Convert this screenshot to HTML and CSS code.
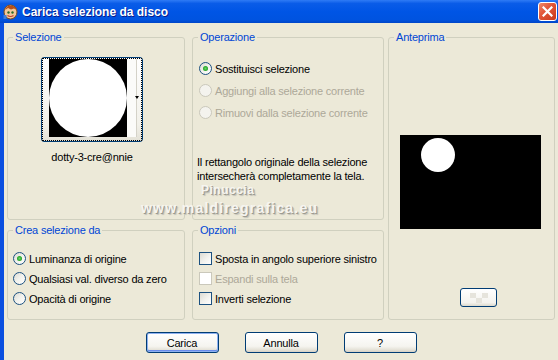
FILE: index.html
```html
<!DOCTYPE html>
<html lang="it">
<head>
    <meta charset="UTF-8">
    <title>Carica selezione da disco</title>
    <link rel="stylesheet" href="styles.css">
</head>
<body>
    <div class="window">
        <div class="titlebar">
            <svg class="app-icon" width="15" height="16" viewBox="0 0 15 16">
                <ellipse cx="7.5" cy="8" rx="6.5" ry="7" fill="#f2c89a" stroke="#7a4a1c" stroke-width="1"/>
                <path d="M2 6 Q4 1 8 1.5 Q13 2 13.5 6 L11 4.5 L8 5.5 L5 4 Z" fill="#b5501d"/>
                <circle cx="5.5" cy="8.5" r="1.2" fill="#2a6b2a"/>
                <circle cx="9.5" cy="8.5" r="1.2" fill="#2a6b2a"/>
                <path d="M4.5 11.5 Q7.5 13.5 10.5 11.5" stroke="#c0392b" stroke-width="1.2" fill="none"/>
                <rect x="0.5" y="11" width="3" height="4" fill="#3f7fd9"/>
            </svg>
            <span class="title">Carica selezione da disco</span>
            <div class="close">
                <svg width="11" height="11" viewBox="0 0 11 11">
                    <path d="M1.5 1.5 L9.5 9.5 M9.5 1.5 L1.5 9.5" stroke="#fff" stroke-width="2.2" stroke-linecap="square"/>
                </svg>
            </div>
        </div>

        <div class="content">
            <div class="panels">
                <fieldset class="group sel">
                    <legend>Selezione</legend>
                    <div class="thumb-wrap">
                        <div class="thumb">
                            <div class="thumb-inner">
                                <svg width="78" height="78" viewBox="0 0 78 78">
                                    <rect width="78" height="78" fill="#000"/>
                                    <circle cx="39" cy="39" r="39" fill="#fff"/>
                                </svg>
                                <div class="thumb-strip"></div>
                                <div class="thumb-arrow"></div>
                            </div>
                        </div>
                        <div class="thumb-name">dotty-3-cre@nnie</div>
                    </div>
                </fieldset>

                <fieldset class="group op">
                    <legend>Operazione</legend>
                    <div class="rows rows-op">
                        <div class="row"><span class="radio checked"></span><span>Sostituisci selezione</span></div>
                        <div class="row disabled"><span class="radio"></span><span>Aggiungi alla selezione corrente</span></div>
                        <div class="row disabled"><span class="radio"></span><span>Rimuovi dalla selezione corrente</span></div>
                    </div>
                    <p class="note">Il rettangolo originale della selezione<br>intersecherà completamente la tela.</p>
                </fieldset>

                <fieldset class="group prev">
                    <legend>Anteprima</legend>
                    <svg class="preview" width="141" height="94" viewBox="0 0 141 94">
                        <rect width="141" height="94" fill="#000"/>
                        <circle cx="38" cy="20" r="17" fill="#fff"/>
                    </svg>
                    <div class="small-btn">
                        <svg width="18" height="10" viewBox="0 0 18 10">
                            <rect x="0" y="0" width="6" height="5" fill="#e6e4dc"/>
                            <rect x="12" y="0" width="6" height="5" fill="#e6e4dc"/>
                            <rect x="6" y="5" width="6" height="5" fill="#e6e4dc"/>
                        </svg>
                    </div>
                </fieldset>

                <fieldset class="group crea">
                    <legend>Crea selezione da</legend>
                    <div class="rows">
                        <div class="row"><span class="radio checked"></span><span>Luminanza di origine</span></div>
                        <div class="row"><span class="radio"></span><span>Qualsiasi val. diverso da zero</span></div>
                        <div class="row"><span class="radio"></span><span>Opacità di origine</span></div>
                    </div>
                </fieldset>

                <fieldset class="group opt">
                    <legend>Opzioni</legend>
                    <div class="rows rows-opt">
                        <div class="row"><span class="check"></span><span>Sposta in angolo superiore sinistro</span></div>
                        <div class="row disabled"><span class="check"></span><span>Espandi sulla tela</span></div>
                        <div class="row"><span class="check"></span><span>Inverti selezione</span></div>
                    </div>
                </fieldset>
            </div>

            <div class="actions">
                <button class="btn default">Carica</button>
                <button class="btn">Annulla</button>
                <button class="btn">?</button>
            </div>

            <div class="watermark">
                <div class="wm-name">Pinuccia</div>
                <div class="wm-site">www.maldiregrafica.eu</div>
            </div>
        </div>
    </div>
</body>
</html>
```

FILE: styles.css
```css
body {
    margin: 0;
    font-family: 'Liberation Sans', Arial, sans-serif;
    font-size: 11px;
    letter-spacing: -0.2px;
    color: #000;
}
.window {
    width: 558px;
    height: 360px;
    display: flex;
    flex-direction: column;
    overflow: hidden;
    background-color: #ece9d8;
}
.titlebar {
    height: 23px;
    display: flex;
    align-items: center;
    padding-left: 3px;
    background: linear-gradient(#2f7bf5 0%, #0a5ce8 15%, #0055e5 50%, #0053e0 85%, #0046c8 100%);
    flex-shrink: 0;
}
.app-icon {
    flex-shrink: 0;
}
.title {
    margin-left: 4px;
    color: #fff;
    font-size: 12px;
    font-weight: bold;
    letter-spacing: 0;
    text-shadow: 1px 1px 0 #0a1c8a;
}
.close {
    margin-left: auto;
    margin-right: 1px;
    width: 19px;
    height: 19px;
    box-sizing: border-box;
    border: 1px solid #fff;
    border-radius: 3px;
    background: linear-gradient(135deg, #f08a6a 0%, #e2583a 40%, #c9381a 100%);
    display: flex;
    align-items: center;
    justify-content: center;
}
.content {
    flex: 1;
    position: relative;
    border-left: 4px solid #0a4fe0;
}
.panels {
    display: grid;
    grid-template-columns: 178px 7px 192px 4px 167px;
    grid-template-rows: 189px 96px;
    row-gap: 4px;
    padding: 8px 0 0 3px;
}
.group {
    margin: 0;
    padding: 0;
    min-width: 0;
    border: 1px solid #d0d0bf;
    border-radius: 3px;
}
.group legend {
    margin-left: 5px;
    padding: 0 2px;
    line-height: 13px;
    color: #0046d5;
}
.sel { grid-column: 1; grid-row: 1; }
.op { grid-column: 3; grid-row: 1; }
.prev { grid-column: 5; grid-row: 1 / span 2; }
.crea { grid-column: 1; grid-row: 2; }
.opt { grid-column: 3; grid-row: 2; }

.thumb-wrap {
    margin: 13px 0 0 33px;
    width: 102px;
    text-align: center;
}
.thumb {
    width: 102px;
    height: 85px;
    box-sizing: border-box;
    border: 1px solid #003c74;
    border-radius: 3px;
    padding: 0;
    background: linear-gradient(#ffffff, #f2f1ea 80%, #e3e1d6);
}
.thumb-inner {
    height: 100%;
    box-sizing: border-box;
    border: 1px dotted #000;
    display: flex;
    align-items: flex-start;
    padding-left: 6px;
}
.thumb-inner svg {
    display: block;
}
.thumb-strip {
    width: 9px;
    height: 78px;
    background-color: #fbfbf9;
    border-right: 1px solid #d4d2c8;
}
.thumb-arrow {
    width: 0;
    height: 0;
    margin: 37px 0 0 -2px;
    border-top: 3px solid #000;
    border-left: 2px solid transparent;
    border-right: 2px solid transparent;
}
.thumb-name {
    margin-top: 8px;
    line-height: 14px;
}

.rows {
    display: flex;
    flex-direction: column;
    gap: 7px;
    padding: 15px 0 0 5px;
}
.rows-op {
    gap: 9px;
    padding: 18px 0 0 6px;
}
.rows-opt {
    padding-left: 6px;
}
.row {
    display: flex;
    align-items: center;
    height: 13px;
    white-space: nowrap;
}
.row .radio,
.row .check {
    margin-right: 3px;
}
.row.disabled {
    color: #aca899;
}
.radio {
    width: 13px;
    height: 13px;
    box-sizing: border-box;
    border: 1px solid #1c5180;
    border-radius: 50%;
    background: linear-gradient(135deg, #dcdbd3 0%, #f2f2ee 50%, #ffffff 100%);
    display: flex;
    align-items: center;
    justify-content: center;
    flex-shrink: 0;
}
.radio.checked::after {
    content: "";
    width: 5px;
    height: 5px;
    border-radius: 50%;
    background: radial-gradient(circle, #6ad66a 0%, #21a121 70%);
}
.row.disabled .radio {
    border-color: #cac8bb;
    background: #f4f3ee;
}
.check {
    width: 13px;
    height: 13px;
    box-sizing: border-box;
    border: 1px solid #1c5180;
    background: linear-gradient(135deg, #dcdbd3 0%, #f2f2ee 55%, #ffffff 100%);
    flex-shrink: 0;
}
.row.disabled .check {
    border-color: #cac8bb;
    background: #ffffff;
}
.note {
    margin: 36px 0 0 4px;
    line-height: 14px;
}

.preview {
    display: block;
    margin: 91px 0 0 11px;
}
.small-btn {
    width: 37px;
    height: 19px;
    box-sizing: border-box;
    margin: 59px 0 0 71px;
    border: 1px solid #003c74;
    border-radius: 3px;
    background: linear-gradient(#ffffff, #f4f3ee 80%, #dcd9cc);
    display: flex;
    align-items: center;
    justify-content: center;
}

.actions {
    display: flex;
    justify-content: center;
    gap: 26px;
    margin-top: 12px;
}
.btn {
    width: 73px;
    height: 21px;
    padding: 0;
    font-family: inherit;
    font-size: 11px;
    letter-spacing: -0.2px;
    color: #000;
    border: 1px solid #003c74;
    border-radius: 3px;
    background: linear-gradient(#ffffff, #f5f4ef 70%, #e3e0d5 90%, #d6d0c5);
}
.btn.default {
    box-shadow: inset 0 0 0 1px #8eb1f0, inset 0 -1px 0 1px #6a8cec;
}

.watermark {
    position: absolute;
    left: 137px;
    top: 161px;
    font-weight: bold;
    color: #f6f5f0;
    letter-spacing: 0.5px;
    text-shadow: 1px 1px 0 #9c9a90, 2px 2px 1px #c4c2b8;
}
.wm-name {
    margin-left: 60px;
    font-size: 12px;
    line-height: 12px;
}
.wm-site {
    margin-top: 4px;
    font-size: 14px;
    line-height: 16px;
    letter-spacing: 1.2px;
}
```
